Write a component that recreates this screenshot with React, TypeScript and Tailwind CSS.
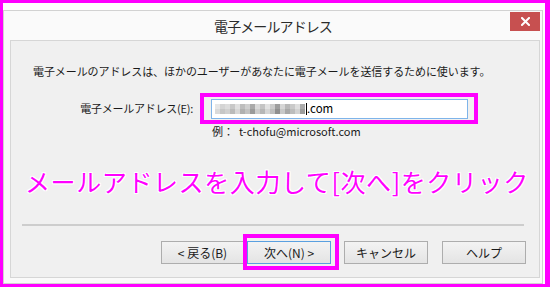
import React from "react";

const mosaicTop = [
  "bg-[#e6e6e6]", "bg-[#d4d4d4]", "bg-[#dcdcdc]", "bg-[#c8c8c8]", "bg-[#e0e0e0]", "bg-[#bdbdbd]",
  "bg-[#cfcfcf]", "bg-[#a9a9a9]", "bg-[#d9d9d9]", "bg-[#c4c4c4]", "bg-[#e2e2e2]", "bg-[#cbcbcb]",
  "bg-[#9e9e9e]", "bg-[#d6d6d6]", "bg-[#b8b8b8]", "bg-[#c9c9c9]", "bg-[#dedede]", "bg-[#ababab]",
];
const mosaicBottom = [
  "bg-[#dadada]", "bg-[#c6c6c6]", "bg-[#d0d0d0]", "bg-[#bababa]", "bg-[#d7d7d7]", "bg-[#b0b0b0]",
  "bg-[#c2c2c2]", "bg-[#9a9a9a]", "bg-[#cccccc]", "bg-[#b6b6b6]", "bg-[#d5d5d5]", "bg-[#bebebe]",
  "bg-[#8f8f8f]", "bg-[#c8c8c8]", "bg-[#a8a8a8]", "bg-[#bcbcbc]", "bg-[#d2d2d2]", "bg-[#9d9d9d]",
];

function Btn({ children, primary = false, className = "" }: { children: React.ReactNode; primary?: boolean; className?: string }) {
  return (
    <div
      className={
        "h-[23px] flex items-center justify-center text-[12px] text-[#1a1a1a] bg-gradient-to-b from-[#f3f3f3] to-[#e4e4e4] border " +
        (primary ? "border-[#5aa0e0]" : "border-[#adadad]") +
        " " +
        className
      }
    >
      {children}
    </div>
  );
}

export default function App() {
  return (
    <div className="w-[550px] h-[287px] bg-white border-l-[3px] border-t-[3px] border-r-[5px] border-b-[3px] border-[#ff00ff] font-['Noto_Sans_CJK_JP',sans-serif] overflow-hidden">
      <div className="mt-[7px] w-[540px] h-[274px] bg-[#fafafa] border border-[#d2d2d2] flex flex-col">
        {/* title bar */}
        <div className="relative h-[29px] flex items-center justify-center">
          <span className="text-[14px] text-[#2b2b2b] tracking-[-0.9px] leading-none mt-[1px]">電子メールアドレス</span>
          <div className="absolute right-[2px] top-[1px] w-[30px] h-[19px] bg-[#c75050] flex items-center justify-center">
            <svg width="9" height="9" viewBox="0 0 9 9">
              <path d="M1 1 L8 8 M8 1 L1 8" stroke="white" strokeWidth="2" strokeLinecap="square" />
            </svg>
          </div>
        </div>
        {/* panel */}
        <div className="ml-[6px] w-[530px] h-[238px] bg-[#f0f0f0] border border-[#d6d6d6] flex flex-col">
          <div className="pt-[22px] pl-[22px] h-[38px] text-[11px] leading-[16px] tracking-[-0.08px] text-[#1a1a1a] whitespace-nowrap">
            電子メールのアドレスは、ほかのユーザーがあなたに電子メールを送信するために使います。
          </div>
          <div className="mt-[14px] flex items-center h-[31px]">
            <div className="w-[189px] pr-[7px] text-right text-[11px] tracking-[-0.25px] text-[#1a1a1a] whitespace-nowrap">
              電子メールアドレス(E):
            </div>
            <div className="w-[278px] h-[31px] border-[4px] border-[#ff00ff] pl-[7px] pt-[2px]">
              <div className="w-[257px] h-[20px] bg-white border border-[#7eb4ea] flex items-center pl-[3px]">
                <div className="flex flex-col">
                  <div className="flex">
                    {mosaicTop.map((c, i) => (
                      <div key={i} className={"w-[5px] h-[5px] " + c} />
                    ))}
                  </div>
                  <div className="flex">
                    {mosaicBottom.map((c, i) => (
                      <div key={i} className={"w-[5px] h-[5px] " + c} />
                    ))}
                  </div>
                </div>
                <div className="w-[1px] h-[12px] bg-black ml-[1px]" />
                <span className="text-[11.5px] text-black leading-none">.com</span>
              </div>
            </div>
          </div>
          <div className="pl-[201px] h-[14px] text-[11px] leading-[14px] text-[#1a1a1a] whitespace-nowrap">
            例：<span className="ml-[5px]">t-chofu@microsoft.com</span>
          </div>
          <div className="mt-[28px] pl-[14px] h-[30px] text-[25px] leading-[30px] tracking-[0.6px] text-[#ff00ff] whitespace-nowrap [text-shadow:1px_0_0_#fff,-1px_0_0_#fff,0_1px_0_#fff,0_-1px_0_#fff,1px_1px_0_#fff,-1px_-1px_0_#fff,1px_-1px_0_#fff,-1px_1px_0_#fff]">
            メールアドレスを入力して[次へ]をクリック
          </div>
          <div className="mt-[28px] ml-[11px] w-[502px] h-[2px] bg-[#cdcdcd]" />
          <div className="mt-[15px] flex pl-[150px]">
            <Btn className="w-[83px]">&lt; 戻る(B)</Btn>
            <div className="relative ml-[3px]">
              <Btn primary className="w-[84px]">次へ(N) &gt;</Btn>
              <div className="absolute left-[-4px] top-[-7px] w-[96px] h-[36px] border-[4px] border-[#ff00ff]" />
            </div>
            <Btn className="ml-[13px] w-[84px]">キャンセル</Btn>
            <Btn className="ml-[14px] w-[84px]">ヘルプ</Btn>
          </div>
        </div>
      </div>
    </div>
  );
}
